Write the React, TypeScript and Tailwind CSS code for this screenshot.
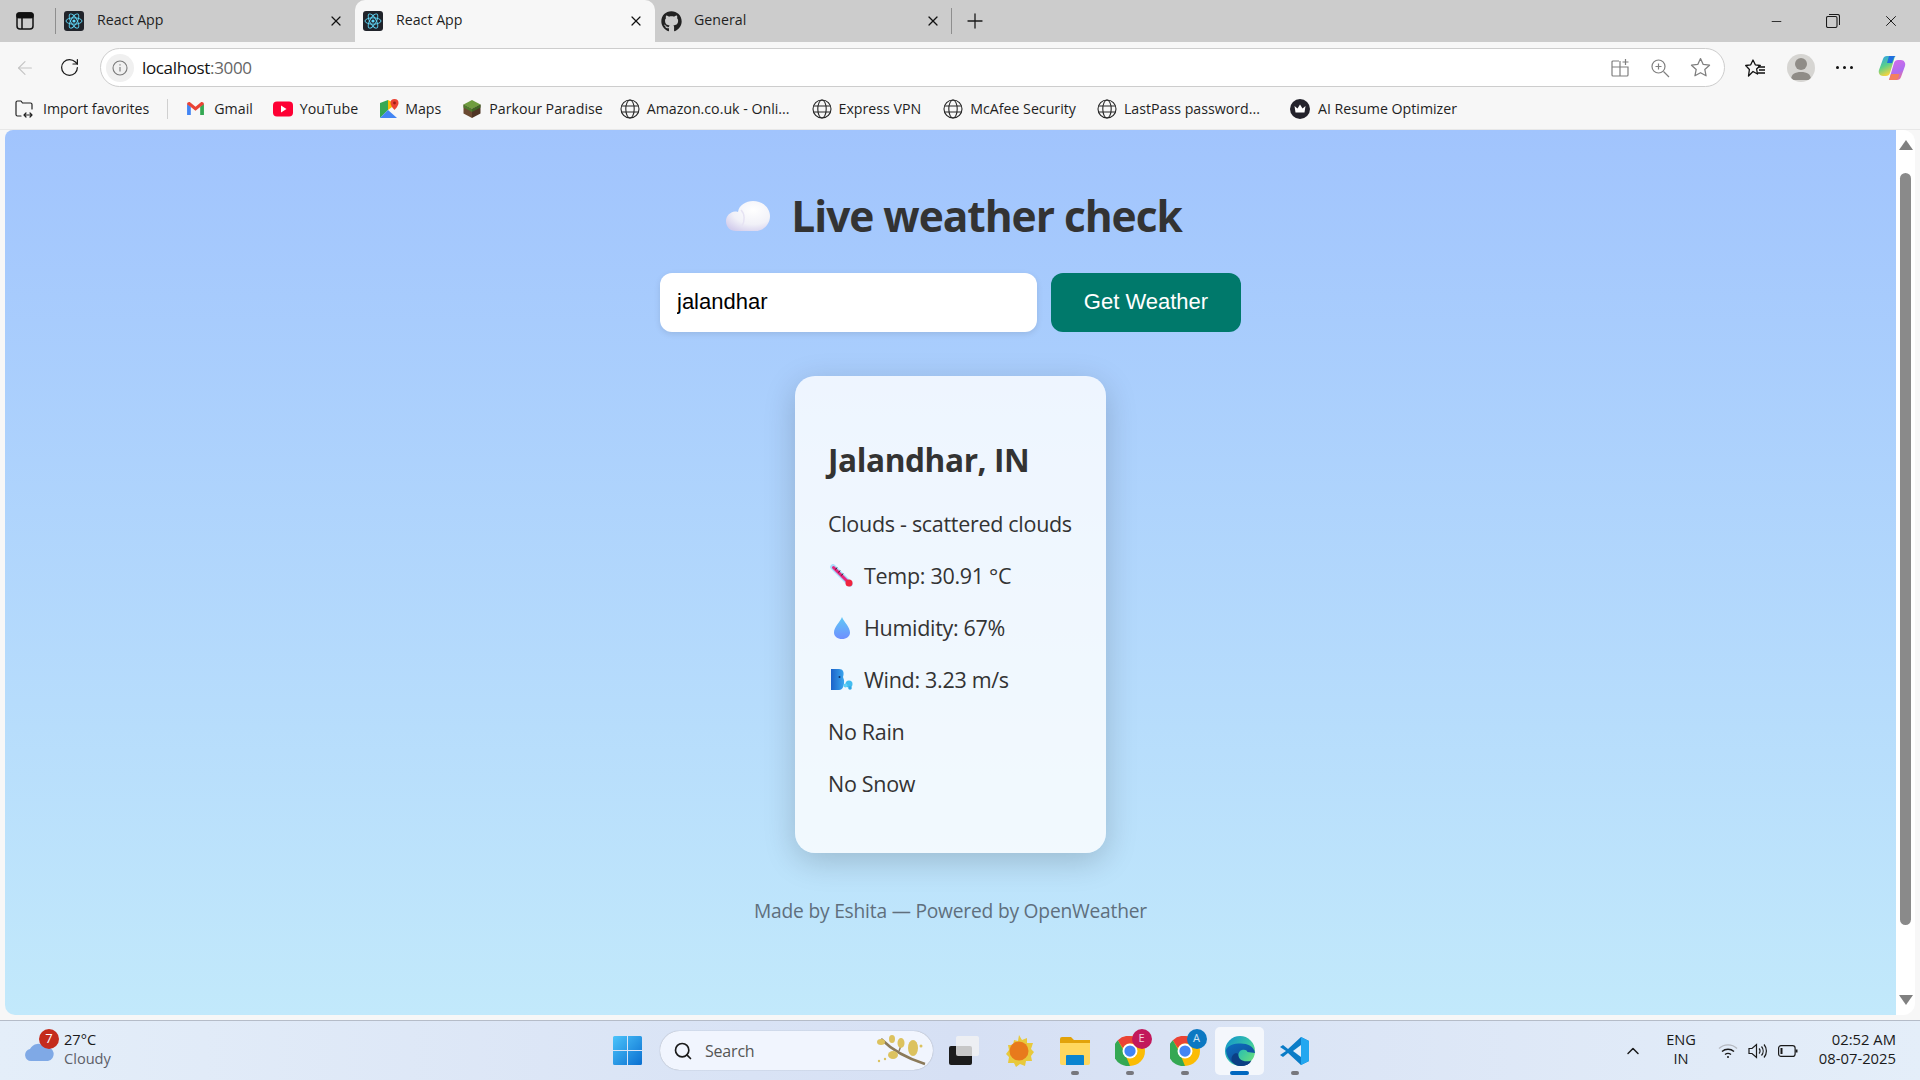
import { useState } from "react";
import { FaGithub } from "react-icons/fa";
import { ChevronUp, Plus, RotateCw, X, ArrowLeft, Minus, Search } from "lucide-react";

const ui = "font-['Open_Sans','Noto_Sans',sans-serif]";

function ReactIcon() {
    return (
        <svg viewBox="0 0 20 20" className="h-[20px] w-[20px] shrink-0">
            <rect width="20" height="20" rx="3" fill="#20232a" />
            <g fill="none" stroke="#61dafb" strokeWidth="0.9">
                <ellipse cx="10" cy="10" rx="8" ry="3.2" />
                <ellipse cx="10" cy="10" rx="8" ry="3.2" transform="rotate(60 10 10)" />
                <ellipse cx="10" cy="10" rx="8" ry="3.2" transform="rotate(120 10 10)" />
            </g>
            <circle cx="10" cy="10" r="1.6" fill="#61dafb" />
        </svg>
    );
}

function Tab({ active, icon, title, width }: { active?: boolean; icon: React.ReactNode; title: string; width: string }) {
    return (
        <div className={`${width} flex h-[42px] shrink-0 items-center pr-[11px] pl-[8px] ${active ? "rounded-t-[10px] bg-[#f7f7f7]" : ""}`}>
            {icon}
            <span className="ml-[13px] flex-1 pb-[2px] text-[14.2px] text-[#1f1f1f]">{title}</span>
            <X className="h-[16px] w-[16px] text-[#111]" strokeWidth={1.8} />
        </div>
    );
}

function Globe() {
    return (
        <svg viewBox="0 0 20 20" className="h-[20px] w-[20px] shrink-0" fill="none" stroke="#262626" strokeWidth="1.1">
            <circle cx="10" cy="10" r="9" />
            <ellipse cx="10" cy="10" rx="4.2" ry="9" />
            <path d="M1.6 7h16.8M1.6 13h16.8" />
        </svg>
    );
}

function Bookmark({ icon, label, className }: { icon: React.ReactNode; label: string; className: string }) {
    return (
        <div className={`flex shrink-0 items-center ${className}`}>
            {icon}
            <span className="text-[14.2px] text-[#1f1f1f]">{label}</span>
        </div>
    );
}

function ImportIcon() {
    return (
        <svg viewBox="0 0 20 20" className="h-[20px] w-[20px]" fill="none" stroke="#222" strokeWidth="1.2" strokeLinecap="round" strokeLinejoin="round">
            <path d="M7 17H3.5A1.5 1.5 0 0 1 2 15.500V3.500A1.500 1.500 0 0 1 3.500 2H7l1.500 2H16.500A1.500 1.500 0 0 1 18 5.500V10" />
            <path d="M10 16h8M12 14l-2 2 2 2M16 14l2 2-2 2" />
        </svg>
    );
}

function GmailIcon() {
    return (
        <svg viewBox="0 0 20 16" className="h-[15px] w-[19px]">
            <path d="M1 15V3l4 3v9z" fill="#4285f4" />
            <path d="M15 15V6l4-3v12z" fill="#34a853" />
            <path d="M1 3.500C1 1.500 3 .5 4.500 1.500L10 6l5.500-4.500C17 .5 19 1.500 19 3.500L15 6.500 10 10.500 5 6.500z" fill="#ea4335" />
        </svg>
    );
}

function YoutubeIcon() {
    return (
        <svg viewBox="0 0 20 16" className="h-[16px] w-[20px]">
            <rect width="20" height="15" y="0.5" rx="4" fill="#fe0034" />
            <path d="M8 4.500 13.500 8 8 11.500z" fill="#fff" />
        </svg>
    );
}

function MapsIcon() {
    return (
        <svg viewBox="0 0 20 20" className="h-[20px] w-[20px]">
            <path d="M1 4 9 1v10L1 19z" fill="#34a853" />
            <path d="M1 19l8-8 9 8z" fill="#4285f4" />
            <path d="M9 1l4 2v5l-4 3z" fill="#fbbc04" />
            <path d="M15.500 0a4 4 0 0 0-4 4c0 3 4 7 4 7s4-4 4-7a4 4 0 0 0-4-4z" fill="#ea4335" />
            <circle cx="15.500" cy="4" r="1.400" fill="#9c1c14" />
        </svg>
    );
}

function BlockIcon() {
    return (
        <svg viewBox="0 0 20 20" className="h-[20px] w-[20px]">
            <path d="M10 1l8.500 4.500L10 10 1.500 5.500z" fill="#6f9d3f" />
            <path d="M1.500 5.500 10 10v9L1.500 14.500z" fill="#6b4a32" />
            <path d="M18.500 5.500 10 10v9l8.500-4.500z" fill="#4f3524" />
            <path d="M1.500 5.500 10 10v3L1.500 8.500z" fill="#4e7a2d" />
            <path d="M18.500 5.500 10 10v3l8.500-4.500z" fill="#3f6524" />
        </svg>
    );
}

function CrownIcon() {
    return (
        <svg viewBox="0 0 20 20" className="h-[20px] w-[20px]">
            <circle cx="10" cy="10" r="10" fill="#23222b" />
            <path d="M4.500 7l3 2.500L10 5.500l2.500 4 3-2.500-1 6.500h-9z" fill="#fff" />
        </svg>
    );
}

function Copilot() {
    return (
        <svg viewBox="0 0 28 28" className="h-[28px] w-[28px]">
            <defs>
                <linearGradient id="cpA" x1="0" y1="0" x2="0.4" y2="1">
                    <stop offset="0" stopColor="#2a9df4" />
                    <stop offset="0.55" stopColor="#5ad08a" />
                    <stop offset="1" stopColor="#f5d33f" />
                </linearGradient>
                <linearGradient id="cpB" x1="0.3" y1="0" x2="0.7" y2="1">
                    <stop offset="0" stopColor="#d36ce8" />
                    <stop offset="0.6" stopColor="#ae6ef0" />
                    <stop offset="1" stopColor="#f2708a" />
                </linearGradient>
            </defs>
            <path d="M9 2h8l-5 17c-.6 2-2 3-4 3H5c-3 0-5-3-4-6L5 5c.6-2 2-3 4-3z" fill="url(#cpA)" />
            <path d="M19 26h-8l5-17c.6-2 2-3 4-3h3c3 0 5 3 4 6l-4 11c-.6 2-2 3-4 3z" fill="url(#cpB)" />
            <path d="M11 2h7c-1 0-2 1-2.500 3L14 9H9z" fill="#1f6fe0" />
            <path d="M11 26h6c2 0 3-1 3.500-3l1-3H13z" fill="#f4805f" />
        </svg>
    );
}

function CloudEmoji() {
    return (
        <svg viewBox="0 0 44 30" className="h-[30px] w-[44px] shrink-0">
            <defs>
                <radialGradient id="cloudFill" cx="0.62" cy="0.3" r="0.8">
                    <stop offset="0" stopColor="#ffffff" />
                    <stop offset="0.6" stopColor="#f1f1f8" />
                    <stop offset="1" stopColor="#d3cdec" />
                </radialGradient>
            </defs>
            <path d="M10 30C4 30 0 26 0 20c0-5 4-9 9-9.500 1 0 2 0 3 .5C13 4 20 0 27 0c10 0 17 7 17 15s-6 15-15 15z" fill="url(#cloudFill)" />
            <path d="M15 9c4 4 4 11 1 16" fill="none" stroke="#e6e3f3" strokeWidth="1.5" />
        </svg>
    );
}

function Thermometer() {
    return (
        <svg viewBox="0 0 24 24" className="ml-[2px] h-[24px] w-[24px] shrink-0">
            <path d="M3 3 20 20" stroke="#a9dcfb" strokeWidth="5.500" strokeLinecap="round" />
            <path d="M3.500 3.500 17 17" stroke="#e6247c" strokeWidth="3" strokeLinecap="round" />
            <circle cx="19" cy="19" r="3.500" fill="#f0243f" />
            <path d="M7 3.500 5.500 5.500M10 6.500 8.500 8.500M13 9.500l-1.500 2" stroke="#222" strokeWidth="1" />
        </svg>
    );
}

function Droplet() {
    return (
        <svg viewBox="0 0 24 24" className="ml-[2px] h-[24px] w-[24px] shrink-0">
            <defs>
                <linearGradient id="dropFill" x1="0" y1="0" x2="0" y2="1">
                    <stop offset="0" stopColor="#5fc8f5" />
                    <stop offset="1" stopColor="#6f8fff" />
                </linearGradient>
            </defs>
            <path d="M12 1C10 6 4 11 4 16.500 4 20.500 7.500 23 12 23s8-2.500 8-6.500C20 11 14 6 12 1z" fill="url(#dropFill)" />
        </svg>
    );
}

function WindFace() {
    return (
        <svg viewBox="0 0 24 24" className="ml-[2px] h-[24px] w-[24px] shrink-0">
            <defs>
                <linearGradient id="windFill" x1="0" y1="0" x2="1" y2="0">
                    <stop offset="0" stopColor="#1b62c9" />
                    <stop offset="1" stopColor="#3aa6ee" />
                </linearGradient>
            </defs>
            <path d="M1 1h8c4 0 5 3 4.500 6L13 9l1 3c.5 5-1 10-5 10H1z" fill="url(#windFill)" />
            <circle cx="9.500" cy="9" r="1" fill="#0c2f66" />
            <circle cx="19" cy="16" r="3.500" fill="#42bdf0" />
            <circle cx="15.500" cy="17.500" r="2" fill="#5fd0f5" />
            <circle cx="20" cy="20" r="1.800" fill="#2ea6e6" />
        </svg>
    );
}

function ChromeIcon({ letter, badge }: { letter: string; badge: string }) {
    return (
        <div className="relative h-[30px] w-[30px] shrink-0">
            <svg viewBox="0 0 32 32" className="h-[30px] w-[30px]">
                <circle cx="16" cy="16" r="16" fill="#fbbc04" />
                <path d="M16 0a16 16 0 0 1 13.900 8H16a8 8 0 0 0-7.500 5L3 4.500A16 16 0 0 1 16 0z" fill="#ea4335" />
                <path d="M3 4.500 9.500 16l6.500 16A16 16 0 0 1 3 4.500z" fill="#34a853" />
                <circle cx="16" cy="16" r="8" fill="#fff" />
                <circle cx="16" cy="16" r="6" fill="#4285f4" />
            </svg>
            <div className={`absolute -top-[7px] left-[17px] flex h-[20px] w-[20px] items-center justify-center rounded-full ${badge} text-[11px] text-white/80`}>{letter}</div>
        </div>
    );
}

function EdgeIcon() {
    return (
        <svg viewBox="0 0 32 32" className="h-[30px] w-[30px]">
            <defs>
                <linearGradient id="edgeTop" x1="0" y1="0" x2="1" y2="0.8">
                    <stop offset="0" stopColor="#0f8fd0" />
                    <stop offset="0.6" stopColor="#36c5a7" />
                    <stop offset="1" stopColor="#6be07a" />
                </linearGradient>
                <linearGradient id="edgeLow" x1="0" y1="0" x2="0.6" y2="1">
                    <stop offset="0" stopColor="#0c6fc0" />
                    <stop offset="1" stopColor="#114a93" />
                </linearGradient>
            </defs>
            <circle cx="16" cy="16" r="16" fill="url(#edgeTop)" />
            <path d="M1 15C2 26 10 32 17 32c5 0 9-2 11-5-4 2-9 1-12-2-3-3-2-9 2-10 3-1 5 0 6 2l8 1C31 11 24 8 17 8 9 8 3 10 1 15z" fill="url(#edgeLow)" />
            <path d="M14 20c0 4 4 7 9 7 2 0 4-.5 5-1-2 4-6 6-11 6-4 0-7-1.500-9-4-2-3-1-7 2-9 2-1 4-.5 4 1z" fill="#0b3f84" />
        </svg>
    );
}

function VsCodeIcon() {
    return (
        <svg viewBox="0 0 30 30" className="h-[30px] w-[30px]">
            <path d="M21 1 29 5v20l-8 4L8 17l-5 4-3-2 6-4-6-4 3-2 5 4z" fill="#0a7cc7" />
            <path d="M21 1 29 5v20l-8 4z" fill="#22a7f0" />
            <path d="M21 9v12l-8-6z" fill="#e2eefb" />
        </svg>
    );
}

function TaskApp({ children, active, dot = true }: { children: React.ReactNode; active?: boolean; dot?: boolean }) {
    return (
        <div className={`relative flex h-[48px] w-[49px] items-center justify-center rounded-[5px] ${active ? "bg-white/70" : ""}`}>
            {children}
            {dot && <span className={`absolute bottom-0 h-[4px] rounded-full ${active ? "w-[19px] bg-[#0067c0]" : "w-[8px] bg-[#77777d]"}`} />}
        </div>
    );
}

function Row({ icon, children }: { icon?: React.ReactNode; children: React.ReactNode }) {
    return (
        <div className="flex h-[52px] items-center gap-[10px] text-[21.5px] tracking-[-0.3px] whitespace-nowrap text-[#333]">
            {icon}
            <span>{children}</span>
        </div>
    );
}

export default function App() {
    const [city, setCity] = useState("jalandhar");

    return (
        <div className={`${ui} flex h-[1080px] w-[1920px] flex-col overflow-hidden bg-[#f7f7f7]`}>
            {/* tab strip */}
            <div className="flex h-[42px] shrink-0 items-center bg-[#cccccc] pl-[16px]">
                <svg viewBox="0 0 18 18" className="h-[18px] w-[18px] shrink-0" fill="none" stroke="#111" strokeWidth="1.5">
                    <rect x="1" y="1" width="16" height="16" rx="3" />
                    <path d="M1 5.500h16M6 5.500V17" />
                    <rect x="1" y="1" width="16" height="4.500" rx="2" fill="#111" />
                </svg>
                <div className="ml-[21px] h-[26px] w-px bg-[#8e8e8e]" />
                <Tab width="w-[299px]" icon={<ReactIcon />} title="React App" />
                <Tab width="w-[300px]" active icon={<ReactIcon />} title="React App" />
                <div className="flex h-[42px] w-[296px] shrink-0 items-center pr-[10px] pl-[6px]">
                    <FaGithub className="h-[21px] w-[21px] text-[#222]" />
                    <span className="ml-[12px] flex-1 pb-[2px] text-[14.2px] text-[#1f1f1f]">General</span>
                    <X className="h-[16px] w-[16px] text-[#111]" strokeWidth={1.8} />
                </div>
                <div className="h-[26px] w-px bg-[#8e8e8e]" />
                <Plus className="ml-[11px] h-[24px] w-[24px] text-[#1a1a1a]" strokeWidth={1.3} />
                <div className="ml-auto flex items-center gap-[42px] pr-[20px]">
                    <Minus className="h-[15px] w-[15px] text-[#1a1a1a]" strokeWidth={1.4} />
                    <svg viewBox="0 0 14 14" className="h-[14px] w-[14px]" fill="none" stroke="#1a1a1a" strokeWidth="1.1">
                        <rect x="0.500" y="2.500" width="10.500" height="11" rx="1.500" />
                        <path d="M3 .5h8.500a2 2 0 0 1 2 2V11" />
                    </svg>
                    <X className="h-[18px] w-[18px] text-[#1a1a1a]" strokeWidth={1.3} />
                </div>
            </div>

            {/* address bar */}
            <div className="flex h-[45px] shrink-0 items-center pt-[6px]">
                <ArrowLeft className="ml-[14px] h-[22px] w-[22px] text-[#c4c4c4]" strokeWidth={1.2} />
                <RotateCw className="ml-[23px] h-[21px] w-[21px] text-[#1a1a1a]" strokeWidth={1.4} />
                <div className="ml-[20px] flex h-[39px] w-[1625px] items-center rounded-full border border-[#cdcdcd] bg-white pr-[13px] pl-[5px]">
                    <div className="flex h-[28px] w-[28px] items-center justify-center rounded-full bg-[#f0f0f0]">
                        <svg viewBox="0 0 16 16" className="h-[16px] w-[16px]" fill="none" stroke="#7a7a7a" strokeWidth="1.1">
                            <circle cx="8" cy="8" r="7" />
                            <path d="M8 7v4.500M8 4.200v1.200" />
                        </svg>
                    </div>
                    <span className="ml-[8px] text-[17px] tracking-[-0.35px] text-[#111]">
                        localhost<span className="text-[#666]">:3000</span>
                    </span>
                    <div className="ml-auto flex items-center gap-[20px]">
                        <svg viewBox="0 0 20 20" className="h-[20px] w-[20px]" fill="none" stroke="#7f7f7f" strokeWidth="1.2">
                            <path d="M9 3H3a1 1 0 0 0-1 1v13a1 1 0 0 0 1 1h14a1 1 0 0 0 1-1V9H2M10 9v9M10 9V3" />
                            <path d="M15.500 1v6M12.500 4h6" />
                        </svg>
                        <svg viewBox="0 0 20 20" className="h-[20px] w-[20px]" fill="none" stroke="#7f7f7f" strokeWidth="1.2">
                            <circle cx="8.500" cy="8.500" r="6.500" />
                            <path d="M13.500 13.500 19 19M8.500 5.500v6M5.500 8.500h6" />
                        </svg>
                        <svg viewBox="0 0 20 20" className="h-[21px] w-[21px]" fill="none" stroke="#7f7f7f" strokeWidth="1.2" strokeLinejoin="round">
                            <path d="M10 1.500l2.600 5.600 6 .7-4.500 4.100 1.200 6L10 15l-5.300 2.900 1.200-6L1.400 7.800l6-.7z" />
                        </svg>
                    </div>
                </div>
                <svg viewBox="0 0 22 20" className="ml-[19px] h-[20px] w-[22px]" fill="none" stroke="#111" strokeWidth="1.3" strokeLinejoin="round">
                    <path d="M9 2l2.300 4.800 5 .7-3.700 3.500.9 5L9 13.500 4.500 18l.9-6.500L1.700 7.500l5-.7z" />
                    <path d="M14 9h7M15 12h6M14 15h7" />
                </svg>
                <div className="ml-[21px] flex h-[28px] w-[28px] items-end justify-center overflow-hidden rounded-full bg-[#d6d5d2]">
                    <svg viewBox="0 0 28 28" className="h-[28px] w-[28px]" fill="#8f8c87">
                        <circle cx="14" cy="10" r="6" />
                        <path d="M4 26c0-6 4-8 10-8s10 2 10 8z" />
                    </svg>
                </div>
                <div className="ml-[21px] flex w-[17px] justify-between">
                    <span className="h-[3px] w-[3px] rounded-full bg-[#111]" />
                    <span className="h-[3px] w-[3px] rounded-full bg-[#111]" />
                    <span className="h-[3px] w-[3px] rounded-full bg-[#111]" />
                </div>
                <div className="ml-[25px]">
                    <Copilot />
                </div>
            </div>

            {/* favourites bar */}
            <div className="flex h-[43px] shrink-0 items-center border-b border-[#e8e8e8] pt-[2px] pl-[14px]">
                <Bookmark className="gap-[9px]" icon={<ImportIcon />} label="Import favorites" />
                <div className="mr-[18px] ml-[18px] h-[20px] w-px bg-[#d0d0d0]" />
                <Bookmark className="mr-[20px] gap-[9px]" icon={<GmailIcon />} label="Gmail" />
                <Bookmark className="mr-[21px] gap-[7px]" icon={<YoutubeIcon />} label="YouTube" />
                <Bookmark className="mr-[21px] gap-[6px]" icon={<MapsIcon />} label="Maps" />
                <Bookmark className="mr-[17px] gap-[7px]" icon={<BlockIcon />} label="Parkour Paradise" />
                <Bookmark className="mr-[22px] gap-[7px]" icon={<Globe />} label="Amazon.co.uk - Onli..." />
                <Bookmark className="mr-[22px] gap-[7px]" icon={<Globe />} label="Express VPN" />
                <Bookmark className="mr-[21px] gap-[7px]" icon={<Globe />} label="McAfee Security" />
                <Bookmark className="mr-[30px] gap-[7px]" icon={<Globe />} label="LastPass password..." />
                <Bookmark className="gap-[8px]" icon={<CrownIcon />} label="AI Resume Optimizer" />
            </div>

            {/* viewport */}
            <div className="flex min-h-0 flex-1 pr-[5px] pb-[5px] pl-[5px]">
                <main className="flex flex-1 flex-col items-center rounded-tl-[8px] rounded-bl-[10px] bg-gradient-to-b from-[#a1c4fd] to-[#c2e9fb] pt-[58px]">
                    <h1 className="ml-[7px] flex h-[56px] items-center gap-[21px] text-[42.5px] font-bold tracking-[-1.05px] text-[#333]">
                        <CloudEmoji />
                        Live weather check
                    </h1>
                    <div className="mt-[29px] flex gap-[14px]">
                        <input
                            value={city}
                            onChange={(e) => setCity(e.target.value)}
                            className="h-[59px] w-[377px] rounded-[12px] bg-white px-[17px] pb-[2px] font-['Liberation_Sans',sans-serif] text-[22px] text-black shadow-[0_2px_6px_rgba(0,0,0,0.1)] outline-none"
                        />
                        <button className="h-[59px] w-[190px] rounded-[12px] bg-[#00796b] pb-[2px] font-['Liberation_Sans',sans-serif] text-[22px] text-white">Get Weather</button>
                    </div>
                    <div className="mt-[44px] h-[477px] w-[311px] rounded-[20px] bg-white/80 px-[33px] pt-[60px] shadow-[0_8px_32px_rgba(0,0,0,0.18)]">
                        <h2 className="mb-[14px] flex h-[48px] items-center text-[31.6px] font-bold tracking-[-0.4px] whitespace-nowrap text-[#333]">Jalandhar, IN</h2>
                        <Row>Clouds - scattered clouds</Row>
                        <Row icon={<Thermometer />}>Temp: 30.91 °C</Row>
                        <Row icon={<Droplet />}>Humidity: 67%</Row>
                        <Row icon={<WindFace />}>Wind: 3.23 m/s</Row>
                        <Row>No Rain</Row>
                        <Row>No Snow</Row>
                    </div>
                    <p className="mt-[44px] text-[19.2px] tracking-[-0.2px] text-[#5f6f7d]">Made by Eshita — Powered by OpenWeather</p>
                </main>
                <div className="flex w-[19px] flex-col items-center rounded-tr-[12px] rounded-br-[12px] bg-white pt-[10px] pb-[10px]">
                    <svg viewBox="0 0 14 10" className="h-[10px] w-[14px] shrink-0" fill="#808080"><path d="M7 0l7 10H0z" /></svg>
                    <div className="mt-[23px] h-[752px] w-[11px] rounded-full bg-[#8a8a8a]" />
                    <svg viewBox="0 0 14 10" className="mt-auto h-[10px] w-[14px] shrink-0" fill="#808080"><path d="M7 10 14 0H0z" /></svg>
                </div>
            </div>

            {/* taskbar */}
            <footer className="flex h-[60px] shrink-0 items-center border-t border-[#b5bcc8] bg-gradient-to-r from-[#e4eef9] via-[#d6e0f4] to-[#e4eef9] text-[#1a1a1a]">
                <div className="relative ml-[25px] flex h-[20px] w-[39px] items-center">
                    <svg viewBox="0 0 30 20" className="h-[20px] w-[30px]">
                        <path d="M6 20a6 6 0 0 1-1-11.900A9 9 0 0 1 20 6a7 7 0 0 1 3 14z" fill="#7fa9e6" />
                    </svg>
                    <span className="absolute -top-[12px] left-[14px] flex h-[20px] w-[20px] items-center justify-center rounded-full bg-[#c42b1c] text-[13px] text-white">7</span>
                </div>
                <div className="flex w-[549px] flex-col pb-[3px] text-[14.6px] leading-[19.5px]">
                    <span>27°C</span>
                    <span className="text-[#5d6068]">Cloudy</span>
                </div>
                <svg viewBox="0 0 29 29" className="h-[29px] w-[29px] shrink-0">
                    <defs>
                        <linearGradient id="winFill" x1="0" y1="0" x2="1" y2="1">
                            <stop offset="0" stopColor="#4cc4fb" />
                            <stop offset="1" stopColor="#0a6fd0" />
                        </linearGradient>
                    </defs>
                    <path d="M0 1.500A1.500 1.500 0 0 1 1.500 0H14v14H0zM15 0h12.500A1.500 1.500 0 0 1 29 1.500V14H15zM0 15h14v14H1.500A1.500 1.500 0 0 1 0 27.500zM15 15h14v12.500a1.500 1.500 0 0 1-1.500 1.500H15z" fill="url(#winFill)" />
                </svg>
                <div className="ml-[18px] flex h-[39px] w-[273px] shrink-0 items-center rounded-full bg-[#f1f5fe] pl-[13px] shadow-[0_0_1px_rgba(0,0,0,0.4)]">
                    <Search className="h-[20px] w-[20px] text-[#1a1a1a]" strokeWidth={2} />
                    <span className="ml-[12px] text-[16px] tracking-[-0.2px] text-[#555]">Search</span>
                    <svg viewBox="0 0 52 32" className="mr-[6px] ml-auto h-[32px] w-[52px]">
                        <path d="M6 4c8 8 22 18 44 25" stroke="#8b7a5a" strokeWidth="2.500" fill="none" />
                        <path d="M24 16c2-4 2-8 3-12" stroke="#8b7a5a" strokeWidth="1.500" fill="none" />
                        <g fill="#dcc25f">
                            <ellipse cx="6" cy="7" rx="4" ry="3" />
                            <ellipse cx="17" cy="4" rx="3" ry="4" />
                            <ellipse cx="26" cy="8" rx="3.500" ry="5" />
                            <ellipse cx="38" cy="13" rx="5" ry="8" />
                            <ellipse cx="18" cy="20" rx="5" ry="4" />
                            <circle cx="46" cy="11" r="1.500" />
                            <circle cx="4" cy="26" r="1.200" />
                            <circle cx="10" cy="24" r="1.200" />
                        </g>
                    </svg>
                </div>
                <div className="ml-[16px] flex w-[30px] shrink-0 justify-center">
                    <div className="relative h-[29px] w-[30px]">
                        <div className="absolute top-[10px] left-0 h-[19px] w-[23px] rounded-[2px] bg-[#1b1b1b]" />
                        <div className="absolute top-0 left-[7px] h-[20px] w-[23px] rounded-[2px] bg-[#f2f2f2]/80" />
                    </div>
                </div>
                <svg viewBox="0 0 30 32" className="ml-[25px] h-[32px] w-[30px] shrink-0">
                    <path d="M15 0l3 5 5-2 0 5 6 0-2 6 3 3-3 4 1 5-6 0-1 5-5-2-4 3-2-4-6 0 1-6-3-3 3-4-1-5 5 0 1-5 4 1z" fill="#e8c93c" />
                    <circle cx="15" cy="16" r="9.500" fill="#e87a1c" />
                </svg>
                <div className="ml-[16px] flex items-center">
                    <TaskApp>
                        <svg viewBox="0 0 30 28" className="h-[28px] w-[30px]">
                            <path d="M0 2a2 2 0 0 1 2-2h9l3 3h16v5H0z" fill="#e2a20a" />
                            <path d="M0 6h30v20a2 2 0 0 1-2 2H2a2 2 0 0 1-2-2z" fill="#ffd75e" />
                            <path d="M7 18h16a1 1 0 0 1 1 1v9H6v-9a1 1 0 0 1 1-1z" fill="#0a84d0" />
                        </svg>
                    </TaskApp>
                    <div className="ml-[6px]"><TaskApp><ChromeIcon letter="E" badge="bg-[#c2185b]" /></TaskApp></div>
                    <div className="ml-[6px]"><TaskApp><ChromeIcon letter="A" badge="bg-[#0b78c2]" /></TaskApp></div>
                    <div className="ml-[6px]"><TaskApp active><EdgeIcon /></TaskApp></div>
                    <div className="ml-[6px]"><TaskApp><VsCodeIcon /></TaskApp></div>
                </div>
                <ChevronUp className="ml-[304px] h-[20px] w-[20px] text-[#1a1a1a]" strokeWidth={1.8} />
                <div className="ml-[20px] flex w-[36px] flex-col items-center pb-[3px] text-[14.6px] leading-[19.5px]">
                    <span>ENG</span>
                    <span>IN</span>
                </div>
                <svg viewBox="0 0 20 16" className="ml-[19px] h-[16px] w-[20px]" fill="none" stroke="#1a1a1a" strokeWidth="1.400">
                    <path d="M1 5.500a13 13 0 0 1 18 0" stroke="#b5b9c0" />
                    <path d="M4 8.500a9 9 0 0 1 12 0M7 11.500a5 5 0 0 1 6 0" />
                    <circle cx="10" cy="14" r="1" fill="#1a1a1a" stroke="none" />
                </svg>
                <svg viewBox="0 0 20 16" className="ml-[10px] h-[16px] w-[20px]" fill="none" stroke="#1a1a1a" strokeWidth="1.200">
                    <path d="M1 5.500v5h3l4.500 4V1.500L4 5.500z" />
                    <path d="M11 5.500a3.500 3.500 0 0 1 0 5M13.500 3.500a7 7 0 0 1 0 9M16 1.500a10 10 0 0 1 0 13" />
                </svg>
                <svg viewBox="0 0 20 12" className="ml-[10px] h-[12px] w-[20px]" fill="none" stroke="#1a1a1a" strokeWidth="1.200">
                    <rect x="0.600" y="0.600" width="16.500" height="10.800" rx="2.500" />
                    <rect x="2.500" y="3" width="2" height="6" fill="#1a1a1a" stroke="none" />
                    <path d="M18.500 4.500v3" strokeWidth="2" />
                </svg>
                <div className="ml-auto flex flex-col items-end pr-[24px] pb-[3px] text-[14.8px] leading-[19.5px]">
                    <span>02:52 AM</span>
                    <span>08-07-2025</span>
                </div>
            </footer>
        </div>
    );
}
